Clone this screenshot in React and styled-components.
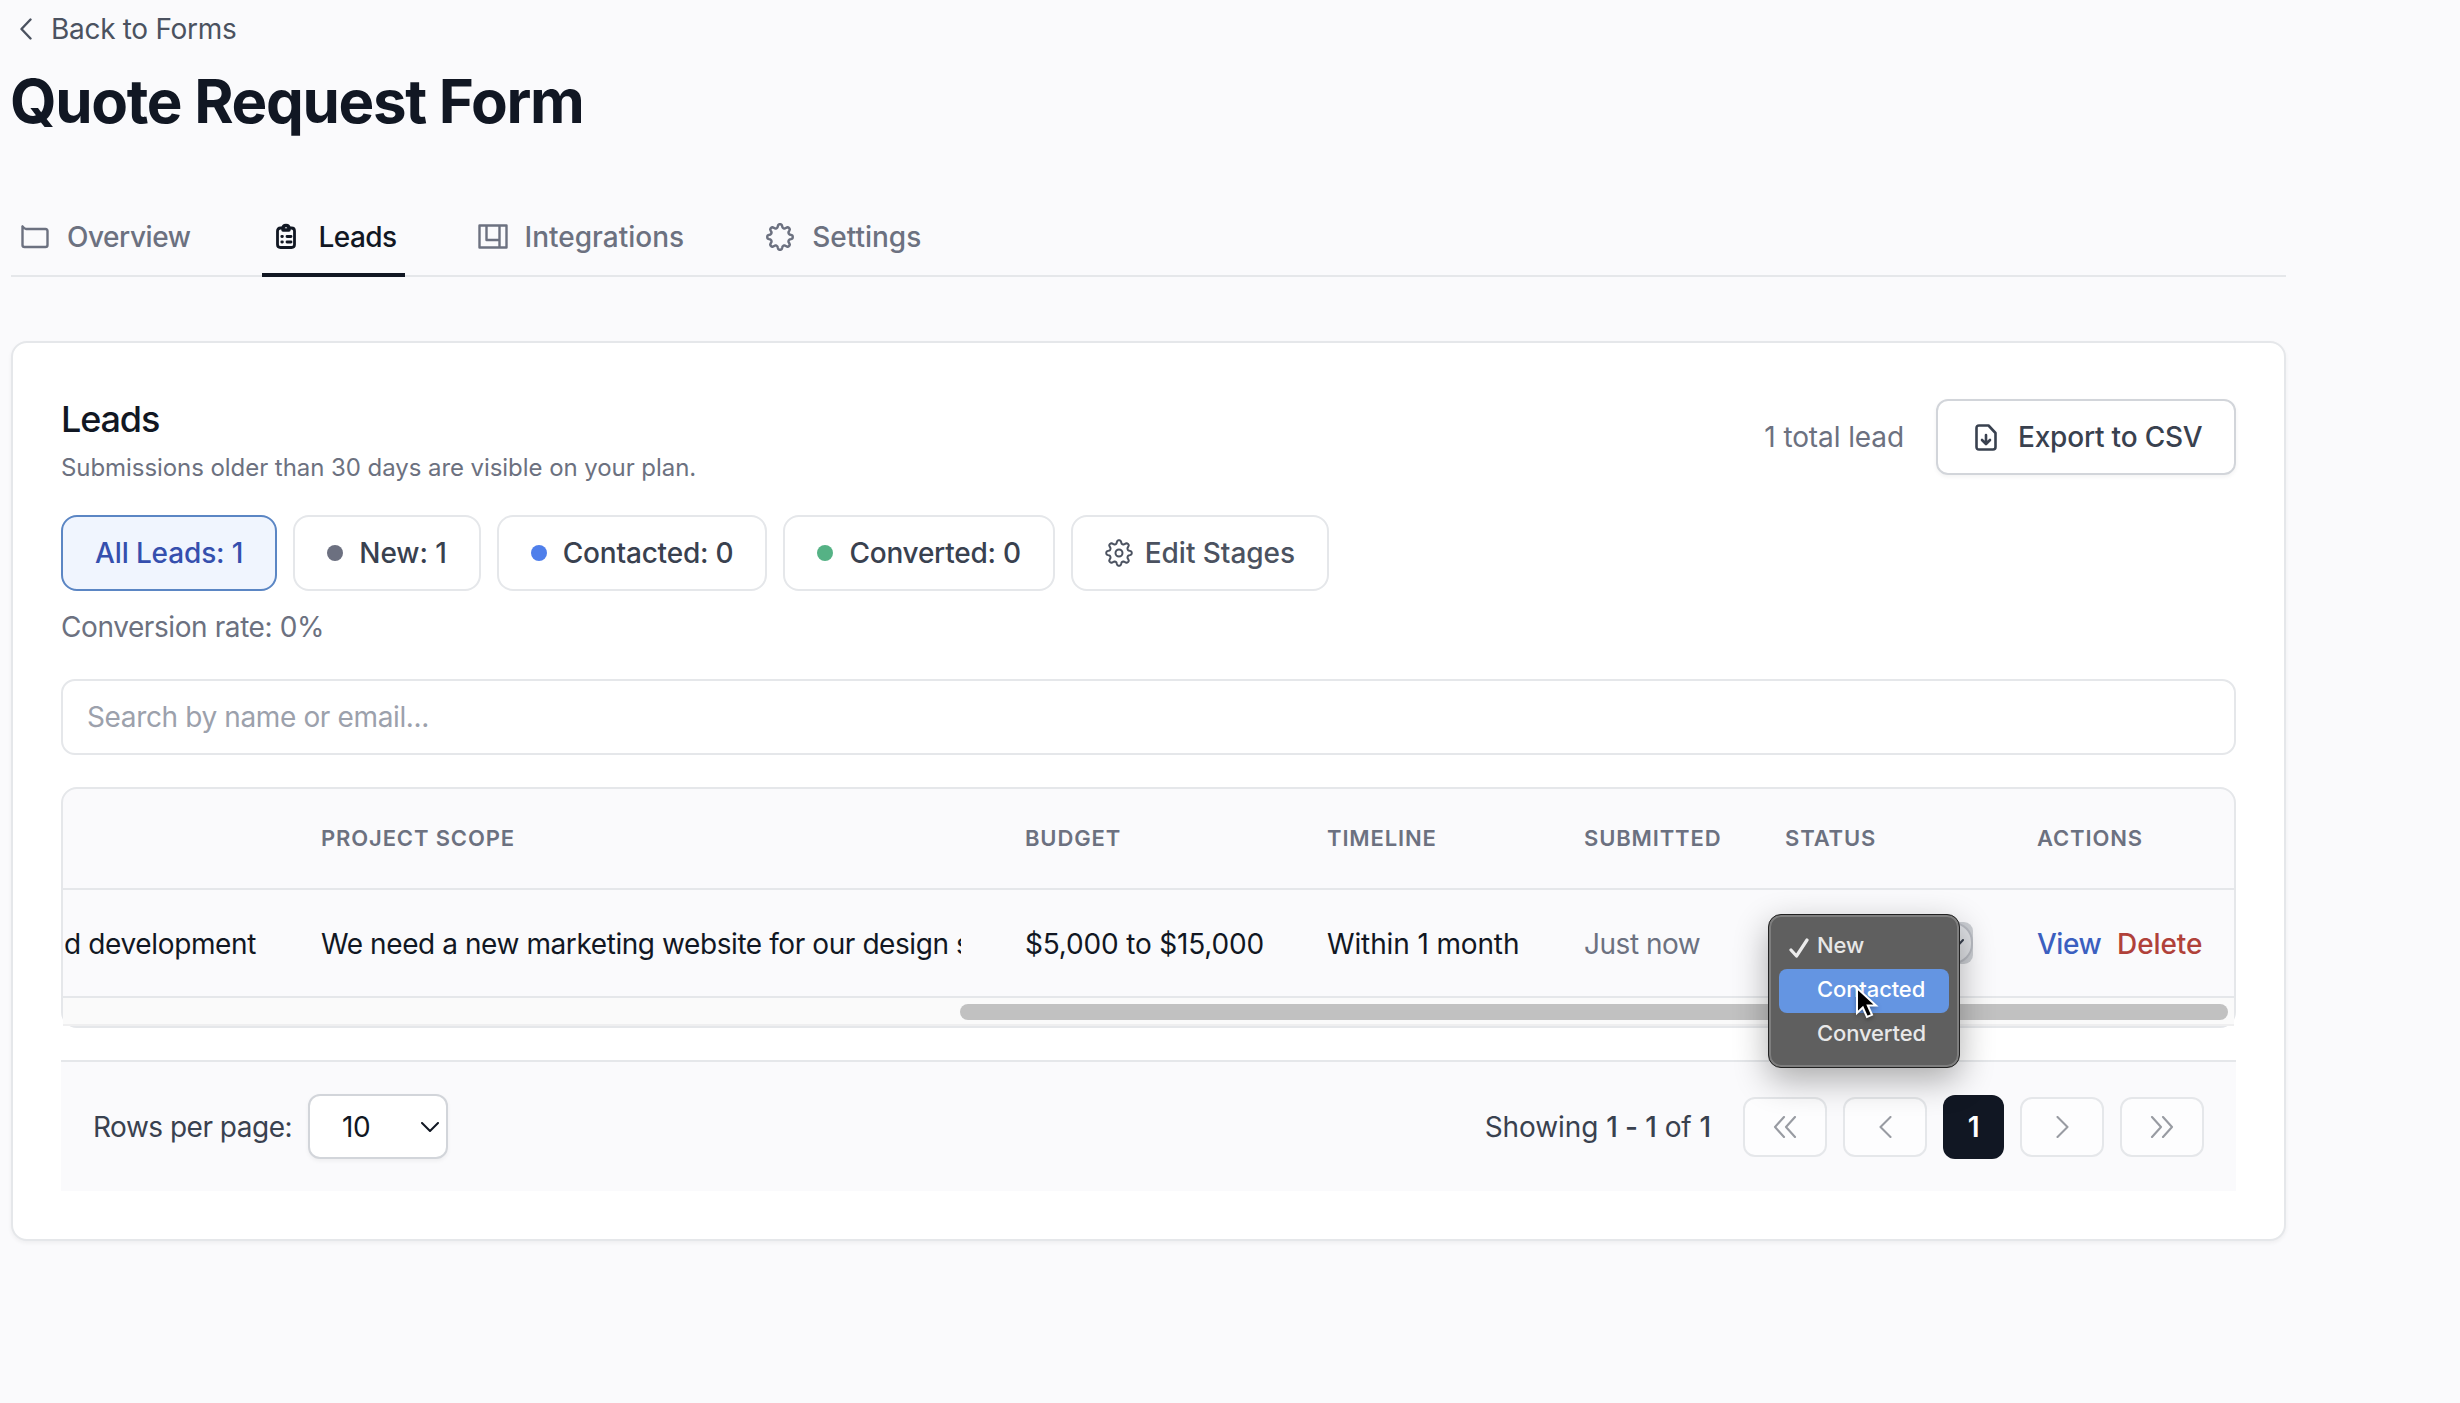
import React from "react";
import styled, { createGlobalStyle } from "styled-components";

const stages = [
  { label: "New: 1", color: "#6c7080", tracking: -0.08 },
  { label: "Contacted: 0", color: "#4f7feb", tracking: -0.2 },
  { label: "Converted: 0", color: "#55b285", tracking: -0.24 },
];

function Gear({ teeth = 8, hole }) {
  const steps = 96;
  const points = Array.from({ length: steps }, (_, i) => {
    const a = (i / steps) * Math.PI * 2;
    const wave = Math.cos(a * teeth);
    const r = 9.5 + 1.5 * Math.tanh(wave * 1.8);
    return `${(12 + r * Math.sin(a)).toFixed(2)} ${(12 - r * Math.cos(a)).toFixed(2)}`;
  });
  return (
    <>
      <path d={`M${points.join("L")}Z`} />
      {hole && <circle cx="12" cy="12" r="3" />}
    </>
  );
}

export default function App() {
  return (
    <>
      <GlobalStyle />
      <Page>
        <BackLink>
          <Icon $w={12} $h={22} $stroke={2.4} viewBox="0 0 12 22">
            <path d="M10.5 1.5 1.5 11l9 9.5" />
          </Icon>
          Back to Forms
        </BackLink>
        <Title>Quote Request Form</Title>

        <Tabs>
          <Tab $tracking={-0.45}>
            <TabIcon>
              <Icon $w={28} $h={24} $stroke={2.4} viewBox="0 0 28 24">
                <path d="M1.5 1.5V20q0 2 2 2h21q2 0 2-2V6q0-2-2-2H5Q3.5 4 1.5 1.5" />
              </Icon>
            </TabIcon>
            Overview
          </Tab>
          <Tab $active $tracking={-0.55}>
            <TabIcon $shift={-2}>
              <Icon $w={20} $h={26} $stroke={2.8} viewBox="0 0 20 26">
                <path d="M6 5H4.500Q1.500 5 1.500 8v13.500q0 3 3 3h11q3 0 3-3V8q0-3-3-3H14" />
                <path strokeWidth="3.4" d="M7 7V5.500Q7 2.500 10 2.500t3 3V7z" />
                <path d="M11 13.500h4M11 19h4M5.800 13.500h.6M5.800 19h.6" />
              </Icon>
            </TabIcon>
            Leads
          </Tab>
          <Tab>
            <TabIcon>
              <Icon $w={30} $h={25} $stroke={2.4} viewBox="0 0 30 25">
                <path d="M1.500 1.500h27v22h-27zM8.500 1.500v14.500h12.500M21.500 1.500v22" />
              </Icon>
            </TabIcon>
            Integrations
          </Tab>
          <Tab>
            <TabIcon>
              <Icon $w={28} $h={28} $stroke={2.1} viewBox="0 0 24 24">
                <Gear />
              </Icon>
            </TabIcon>
            Settings
          </Tab>
        </Tabs>

        <Card>
          <CardHeader>
            <div>
              <Heading>Leads</Heading>
              <Note>Submissions older than 30 days are visible on your plan.</Note>
            </div>
            <HeaderActions>
              1 total lead
              <ExportButton>
                <Icon $w={22} $h={27} $stroke={2.6} viewBox="0 0 22 27">
                  <path d="M4 1.500h9.500L20.500 9v14q0 2.500-2.500 2.500H4Q1.500 25.500 1.500 23V4q0-2.500 2.500-2.500zM11 11v8.500M7 16l4 4 4-4" />
                </Icon>
                Export to CSV
              </ExportButton>
            </HeaderActions>
          </CardHeader>

          <Chips>
            <Chip $active $tracking={-0.13}>
              All Leads: 1
            </Chip>
            {stages.map((stage) => (
              <Chip key={stage.label} $tracking={stage.tracking}>
                <Dot $color={stage.color} />
                {stage.label}
              </Chip>
            ))}
            <Chip $muted $tracking={-0.05}>
              <Icon $w={28} $h={28} $stroke={1.7} viewBox="0 0 24 24">
                <Gear hole />
              </Icon>
              Edit Stages
            </Chip>
          </Chips>
          <Conversion>Conversion rate: 0%</Conversion>
          <Search placeholder="Search by name or email..." />

          <TableBox>
            <HeadRow>
              <span />
              <span>Project Scope</span>
              <span>Budget</span>
              <span>Timeline</span>
              <span>Submitted</span>
              <span>Status</span>
              <span>Actions</span>
            </HeadRow>
            <Row>
              <Cell>d development</Cell>
              <Clipped>We need a new marketing website for our design s</Clipped>
              <Cell $tracking={-0.18}>$5,000 to $15,000</Cell>
              <Cell $tracking={-0.13}>Within 1 month</Cell>
              <Cell $muted $tracking={-0.48}>
                Just now
              </Cell>
              <StatusCell>
                <StatusRing>
                  <StatusSelect>
                    <Icon $w={14} $h={9} $stroke={2} viewBox="0 0 14 9">
                      <path d="m1 1 6 6.500L13 1" />
                    </Icon>
                  </StatusSelect>
                </StatusRing>
                <Menu>
                  <MenuItem>
                    <Check viewBox="0 0 20 20">
                      <path d="m2 12 5.500 6L18 2" />
                    </Check>
                    New
                  </MenuItem>
                  <MenuItem $active>Contacted</MenuItem>
                  <MenuItem>Converted</MenuItem>
                  <Cursor viewBox="0 0 24 34">
                    <path d="M2 2v25l5.800-5.500L12 31l5-2.200-4.200-9.300H21z" />
                  </Cursor>
                </Menu>
              </StatusCell>
              <Actions>
                <Action $color="#3b5fc0" $tracking={-0.5}>
                  View
                </Action>
                <Action $color="#b0413a">Delete</Action>
              </Actions>
            </Row>
            <ScrollTrack>
              <ScrollThumb />
            </ScrollTrack>
          </TableBox>

          <Pager>
            <PagerGroup>
              Rows per page:
              <PageSize>
                10
                <Icon $w={18} $h={10} $stroke={2} viewBox="0 0 18 10">
                  <path d="m1 1 8 8 8-8" />
                </Icon>
              </PageSize>
            </PagerGroup>
            <PagerGroup>
              <Showing>
                Showing <b>1 - 1</b> of <b>1</b>
              </Showing>
              <PageButton>
                <Icon $w={24} $h={22} $stroke={2.1} viewBox="0 0 24 22">
                  <path d="M11 1 2 11l9 10M22 1l-9 10 9 10" />
                </Icon>
              </PageButton>
              <PageButton>
                <Icon $w={13} $h={22} $stroke={2.1} viewBox="0 0 13 22">
                  <path d="M11.500 1 1.500 11l10 10" />
                </Icon>
              </PageButton>
              <CurrentPage>1</CurrentPage>
              <PageButton>
                <Icon $w={13} $h={22} $stroke={2.1} viewBox="0 0 13 22">
                  <path d="m1.500 1 10 10-10 10" />
                </Icon>
              </PageButton>
              <PageButton>
                <Icon $w={24} $h={22} $stroke={2.1} viewBox="0 0 24 22">
                  <path d="m2 1 9 10-9 10M13 1l9 10-9 10" />
                </Icon>
              </PageButton>
            </PagerGroup>
          </Pager>
        </Card>
      </Page>
    </>
  );
}

const GlobalStyle = createGlobalStyle`
  * {
    box-sizing: border-box;
  }
  body {
    margin: 0;
    background-color: #fafafc;
    font-family: Inter, "Liberation Sans", sans-serif;
    font-size: 28px;
    line-height: 40px;
    color: #111723;
  }
`;

const Page = styled.div`
  width: 2460px;
  height: 1403px;
  padding: 9px 174px 0 11px;
  overflow: hidden;
`;

const Icon = styled.svg`
  width: ${({ $w }) => $w}px;
  height: ${({ $h }) => $h}px;
  flex: none;
  fill: none;
  stroke: currentColor;
  stroke-width: ${({ $stroke }) => $stroke};
  stroke-linecap: round;
  stroke-linejoin: round;
`;

const BackLink = styled.div`
  display: flex;
  align-items: center;
  gap: 19px;
  padding-left: 9px;
  letter-spacing: -0.3px;
  color: #4b5260;
`;

const Title = styled.h1`
  margin: 16px 0 0 -1px;
  font-size: 60px;
  line-height: 72px;
  font-weight: 700;
  letter-spacing: -1.32px;
`;

const Tabs = styled.div`
  display: flex;
  gap: 64px;
  margin-top: 63px;
  height: 77px;
  border-bottom: 2px solid #e5e7ea;
`;

const Tab = styled.div`
  display: flex;
  align-items: center;
  gap: 16px;
  height: 77px;
  padding: 0 8px;
  font-weight: 500;
  letter-spacing: ${({ $tracking }) => $tracking || 0}px;
  color: ${({ $active }) => ($active ? "#111723" : "#6c7180")};
  border-bottom: 4px solid ${({ $active }) => ($active ? "#111723" : "transparent")};
`;

const TabIcon = styled.span`
  display: flex;
  align-items: center;
  justify-content: center;
  width: 32px;
  height: 32px;
  margin-top: ${({ $shift }) => $shift || 0}px;
`;

const Card = styled.div`
  height: 900px;
  margin-top: 64px;
  padding: 48px;
  border: 2px solid #e5e7ea;
  border-radius: 16px;
  background-color: #ffffff;
  box-shadow: 0 2px 4px rgba(0, 0, 0, 0.05);
`;

const CardHeader = styled.div`
  display: flex;
  justify-content: space-between;
  height: 124px;
  padding-top: 8px;
`;

const Heading = styled.h2`
  margin: 0;
  font-size: 36px;
  line-height: 40px;
  font-weight: 500;
  letter-spacing: -1.15px;
`;

const Note = styled.p`
  margin: 13px 0 0;
  font-size: 24px;
  line-height: 32px;
  letter-spacing: -0.06px;
  color: #6c7180;
`;

const HeaderActions = styled.div`
  display: flex;
  align-items: center;
  gap: 32px;
  height: 76px;
  letter-spacing: -0.1px;
  color: #6c7180;
`;

const ExportButton = styled.div`
  display: flex;
  align-items: center;
  gap: 21px;
  width: 300px;
  height: 76px;
  padding-left: 37px;
  border: 2px solid #d2d5da;
  border-radius: 12px;
  font-weight: 500;
  letter-spacing: -0.2px;
  color: #39414f;
  box-shadow: 0 2px 4px rgba(0, 0, 0, 0.05);
`;

const Chips = styled.div`
  display: flex;
  gap: 16px;
`;

const Chip = styled.div`
  display: flex;
  align-items: center;
  gap: ${({ $muted }) => ($muted ? 12 : 16)}px;
  height: 76px;
  padding: 0 32px;
  border: 2px solid ${({ $active }) => ($active ? "#5b86c4" : "#e5e7ea")};
  border-radius: 16px;
  font-weight: 500;
  letter-spacing: ${({ $tracking }) => $tracking}px;
  color: ${({ $active, $muted }) => ($active ? "#354fae" : $muted ? "#4b5260" : "#39414f")};
  background-color: ${({ $active }) => ($active ? "#f0f5fe" : "#ffffff")};
`;

const Dot = styled.span`
  width: 16px;
  height: 16px;
  border-radius: 50%;
  background-color: ${({ $color }) => $color};
`;

const Conversion = styled.p`
  margin: 16px 0 0;
  letter-spacing: -0.41px;
  color: #6c7180;
`;

const Search = styled.input`
  display: block;
  width: 100%;
  height: 76px;
  margin-top: 32px;
  padding: 0 24px;
  border: 2px solid #e5e7ea;
  border-radius: 14px;
  outline: none;
  font: inherit;
  letter-spacing: -0.37px;

  &::placeholder {
    color: #9ca1ac;
  }
`;

const TableBox = styled.div`
  height: 241px;
  margin-top: 32px;
  border: 2px solid #e5e7ea;
  border-radius: 16px;
  background-color: #fafafc;
`;

const HeadRow = styled.div`
  display: grid;
  grid-template-columns: 226px 704px 302px 257px 201px 252px 1fr;
  align-items: center;
  height: 101px;
  padding-bottom: 2px;
  border-bottom: 2px solid #e5e7ea;
  font-size: 22px;
  font-weight: 600;
  letter-spacing: 0.86px;
  text-transform: uppercase;
  color: #6c7180;

  span {
    padding-left: 32px;
  }
`;

const Row = styled.div`
  display: grid;
  grid-template-columns: 226px 704px 302px 257px 201px 252px 1fr;
  align-items: center;
  height: 108px;
  border-bottom: 2px solid #e5e7ea;
  white-space: nowrap;
`;

const Cell = styled.span`
  padding: 2px 0 0 32px;
  letter-spacing: ${({ $tracking }) => $tracking || -0.36}px;
  color: ${({ $muted }) => ($muted ? "#6c7180" : "#111723")};

  &:first-child {
    padding-left: 1px;
  }
`;

const Clipped = styled.div`
  width: 640px;
  margin-left: 32px;
  padding-top: 2px;
  letter-spacing: -0.42px;
  overflow: hidden;
`;

const StatusCell = styled.div`
  position: relative;
  display: flex;
  padding-left: 32px;
`;

const StatusRing = styled.div`
  width: 188px;
  height: 42px;
  border-radius: 9px;
  background-color: #cccfd4;
`;

const StatusSelect = styled.div`
  display: flex;
  align-items: center;
  justify-content: flex-end;
  height: 42px;
  padding-right: 7px;
  border: 2px solid #b9bcc3;
  border-radius: 20px;
  background-color: #dfe1e5;
  color: #39414f;
`;

/* open native-style select list, floating over the row */
const Menu = styled.div`
  position: absolute;
  z-index: 1;
  top: -8px;
  left: 15px;
  width: 192px;
  height: 154px;
  padding: 10px;
  border: 1px solid #222222;
  border-radius: 13px;
  background-color: #5f5f5f;
  box-shadow:
    inset 0 0 0 2px #7e7e7e,
    0 12px 34px rgba(0, 0, 0, 0.32);
`;

const MenuItem = styled.div`
  position: relative;
  height: 44px;
  padding-left: 38px;
  border-radius: 8px;
  font-size: 22px;
  line-height: 40px;
  font-weight: 500;
  letter-spacing: -0.12px;
  color: ${({ $active }) => ($active ? "#ffffff" : "#e8e8e8")};
  background-color: ${({ $active }) => ($active ? "#6495e2" : "transparent")};
`;

const Check = styled.svg`
  position: absolute;
  top: 13px;
  left: 10px;
  width: 20px;
  height: 20px;
  fill: none;
  stroke: #ececec;
  stroke-width: 3.2;
  stroke-linecap: round;
  stroke-linejoin: round;
`;

const Cursor = styled.svg`
  position: absolute;
  top: 71px;
  left: 86px;
  width: 24px;
  height: 34px;
  fill: #000000;
  stroke: #ffffff;
  stroke-width: 2;
  filter: drop-shadow(0 2px 2px rgba(0, 0, 0, 0.3));
`;

const Actions = styled.div`
  display: flex;
  gap: 16px;
  padding: 2px 0 0 32px;
`;

const Action = styled.span`
  font-weight: 500;
  letter-spacing: ${({ $tracking }) => $tracking || -0.1}px;
  color: ${({ $color }) => $color};
`;

const ScrollTrack = styled.div`
  display: flex;
  justify-content: flex-end;
  height: 28px;
  padding: 6px 6px 0 0;
  border-bottom: 2px solid #efeff0;
  background-color: #fafafa;
`;

const ScrollThumb = styled.div`
  width: 1268px;
  height: 16px;
  border-radius: 8px;
  background-color: #c1c1c1;
`;

const Pager = styled.div`
  display: flex;
  align-items: center;
  justify-content: space-between;
  height: 131px;
  margin-top: 32px;
  padding: 0 32px;
  border-top: 2px solid #e5e7ea;
  background-color: #fafafc;
  letter-spacing: -0.5px;
  color: #39414f;
`;

const PagerGroup = styled.div`
  display: flex;
  align-items: center;
  gap: 16px;
`;

const PageSize = styled.div`
  display: flex;
  align-items: center;
  justify-content: space-between;
  width: 140px;
  height: 65px;
  padding: 0 7px 0 32px;
  border: 2px solid #d2d5da;
  border-radius: 12px;
  background-color: #ffffff;
  color: #111723;
  box-shadow: 0 2px 4px rgba(0, 0, 0, 0.05);
`;

const Showing = styled.span`
  margin-right: 16px;
  letter-spacing: -0.08px;

  b {
    font-weight: 500;
  }
`;

const PageButton = styled.div`
  display: flex;
  align-items: center;
  justify-content: center;
  width: 84px;
  height: 60px;
  border: 2px solid #e5e7ea;
  border-radius: 12px;
  background-color: #fdfdfe;
  color: #989ba2;
`;

const CurrentPage = styled.div`
  width: 61px;
  height: 64px;
  border-radius: 12px;
  background-color: #111723;
  color: #ffffff;
  font-weight: 600;
  line-height: 64px;
  text-align: center;
`;
